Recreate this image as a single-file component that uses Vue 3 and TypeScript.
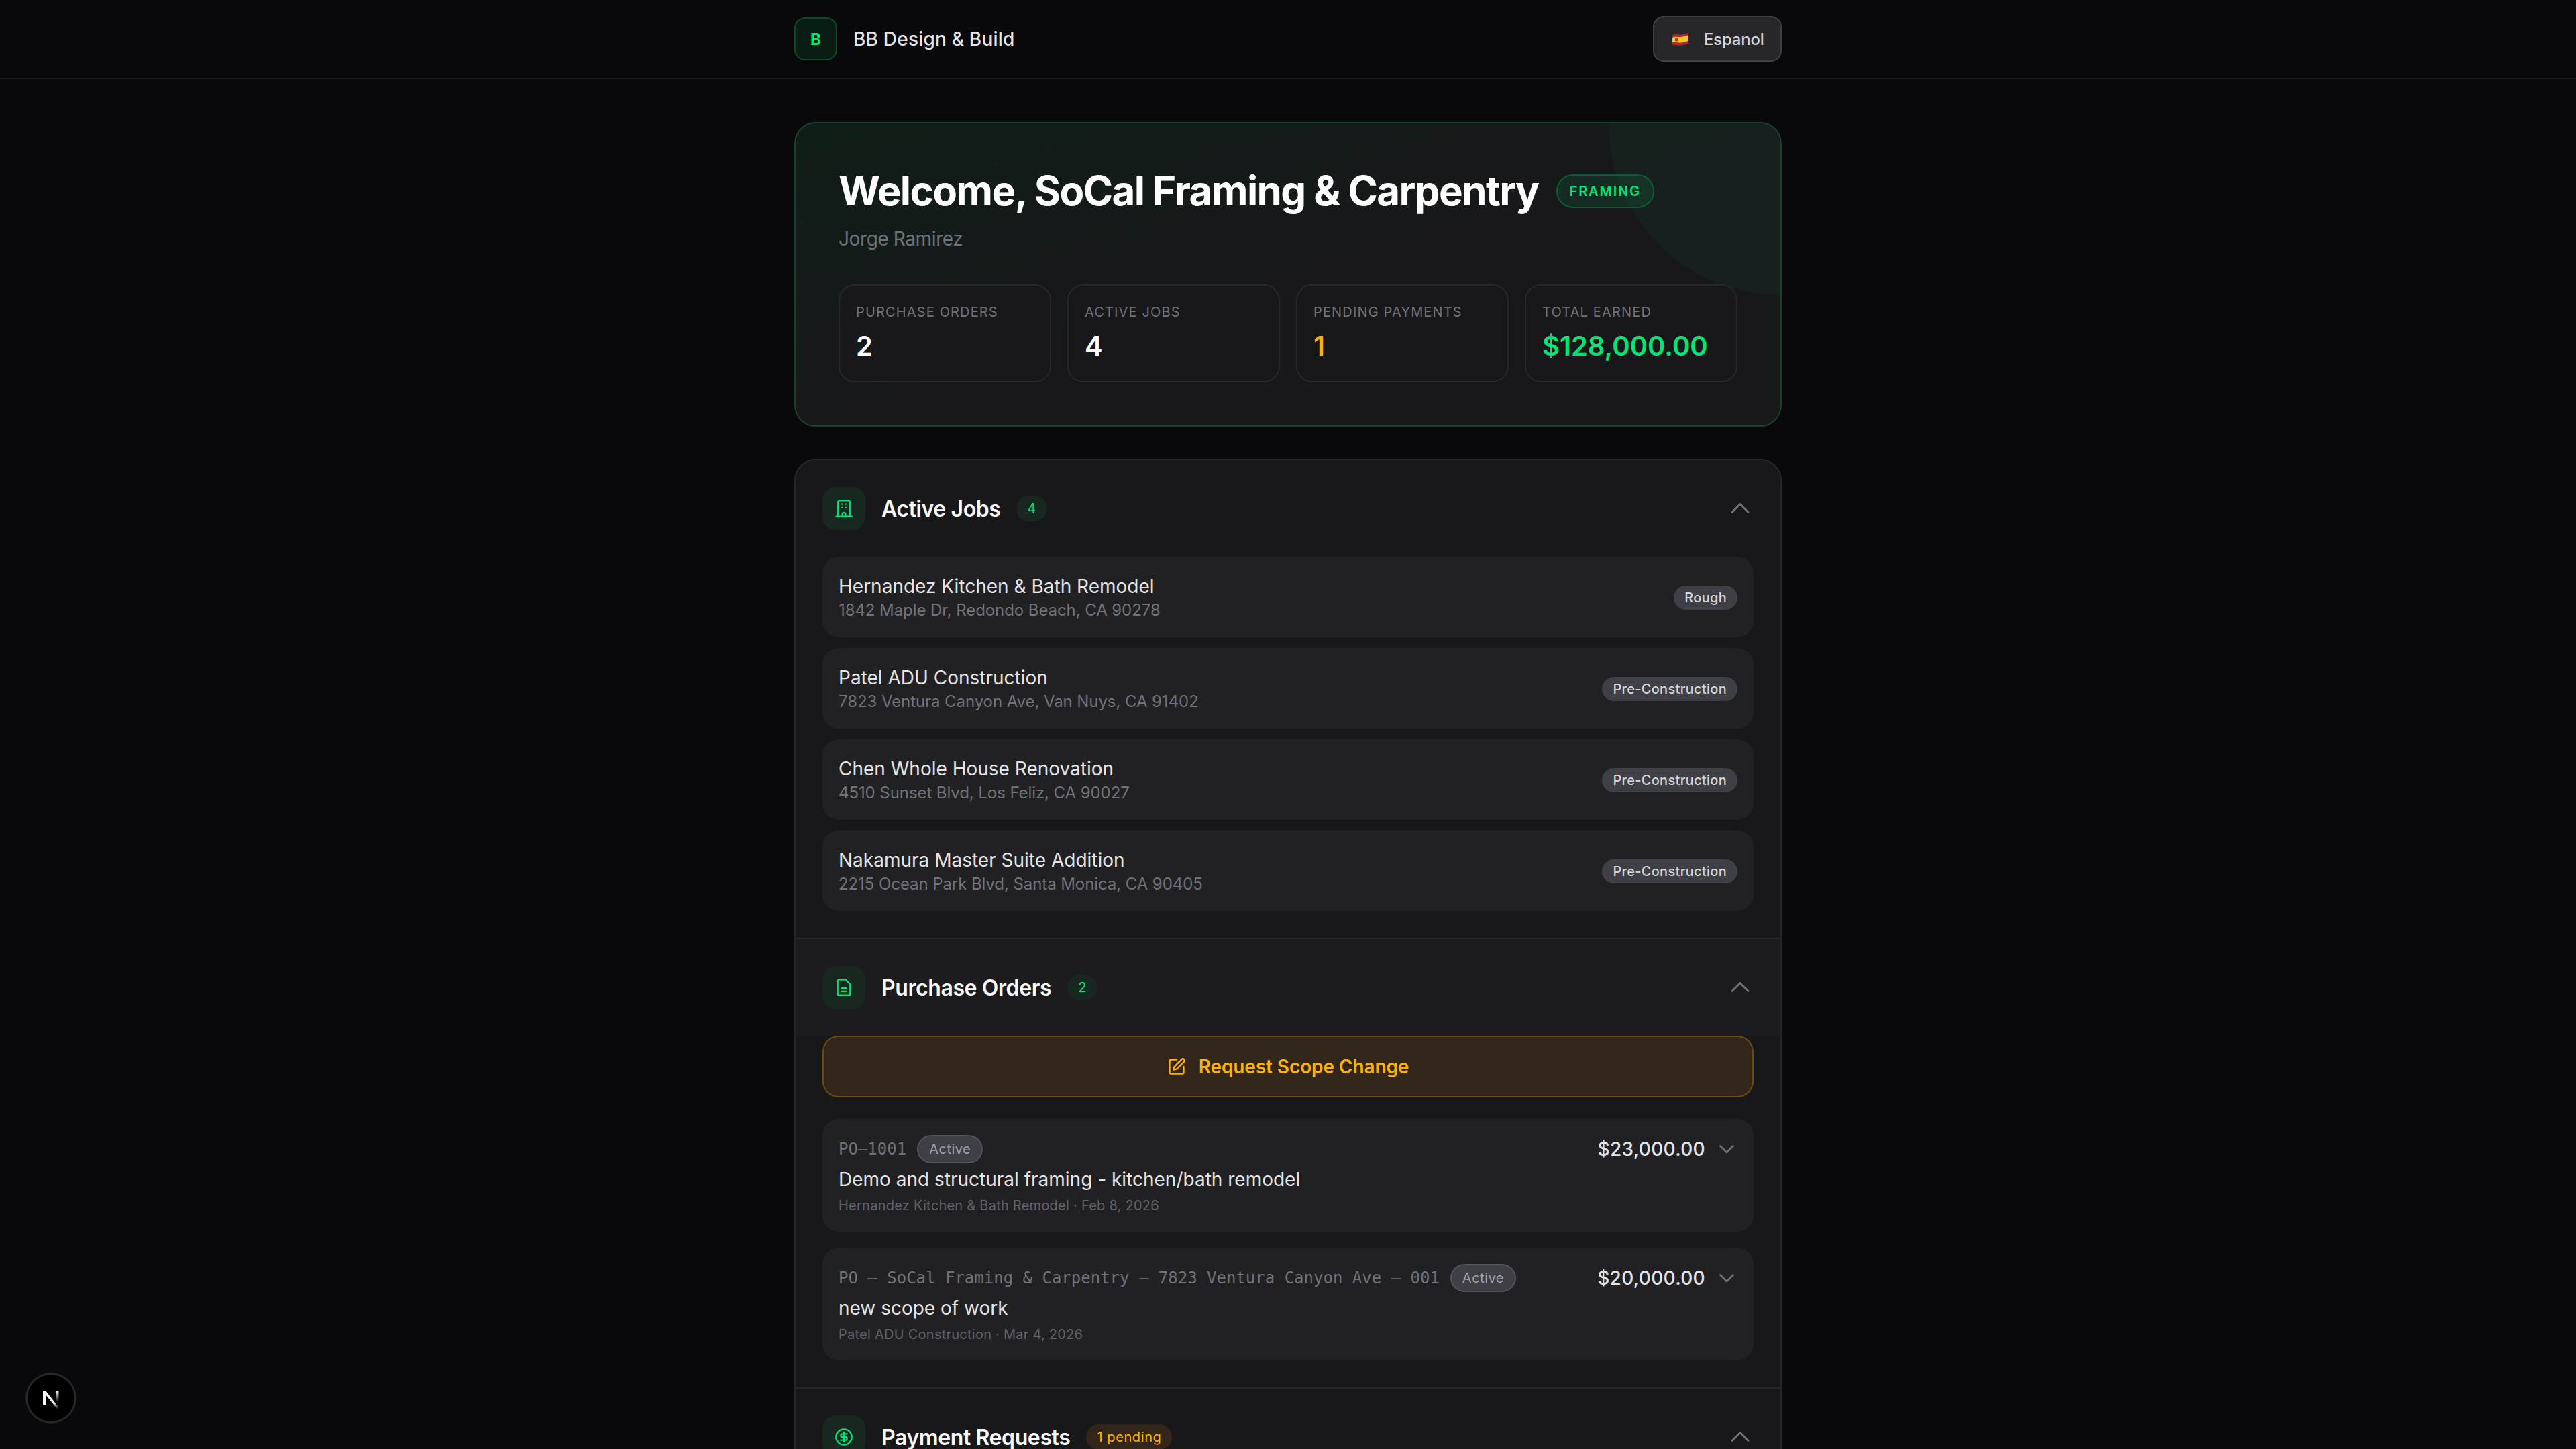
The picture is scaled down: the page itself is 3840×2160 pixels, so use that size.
<script setup lang="ts">
interface Stat { label: string; value: string; tone: string }
interface Job { name: string; address: string; stage: string }
interface Order { id: string; title: string; meta: string; amount: string }

const stats: Stat[] = [
  { label: 'Purchase Orders', value: '2', tone: '' },
  { label: 'Active Jobs', value: '4', tone: '' },
  { label: 'Pending Payments', value: '1', tone: 'amber' },
  { label: 'Total Earned', value: '$128,000.00', tone: 'green' },
]
const jobs: Job[] = [
  { name: 'Hernandez Kitchen & Bath Remodel', address: '1842 Maple Dr, Redondo Beach, CA 90278', stage: 'Rough' },
  { name: 'Patel ADU Construction', address: '7823 Ventura Canyon Ave, Van Nuys, CA 91402', stage: 'Pre-Construction' },
  { name: 'Chen Whole House Renovation', address: '4510 Sunset Blvd, Los Feliz, CA 90027', stage: 'Pre-Construction' },
  { name: 'Nakamura Master Suite Addition', address: '2215 Ocean Park Blvd, Santa Monica, CA 90405', stage: 'Pre-Construction' },
]
const orders: Order[] = [
  { id: 'PO–1001', title: 'Demo and structural framing - kitchen/bath remodel', meta: 'Hernandez Kitchen & Bath Remodel · Feb 8, 2026', amount: '$23,000.00' },
  { id: 'PO – SoCal Framing & Carpentry – 7823 Ventura Canyon Ave – 001', title: 'new scope of work', meta: 'Patel ADU Construction · Mar 4, 2026', amount: '$20,000.00' },
]
</script>

<template>
  <div class="page">
    <header class="topbar">
      <div class="topbar-inner">
        <div class="brand">
          <div class="logo">B</div>
          <span class="brand-name">BB Design &amp; Build</span>
        </div>
        <button class="lang">
          <svg class="flag" width="26" height="20" viewBox="0 0 26 20">
            <path d="M1 4.500C6 2 10 4 14 3.500C18 3 22 1.500 25 1V17C22 17.500 18 19 14 19.500C10 20 6 18 1 19Z" fill="#b5262c" />
            <path d="M1 8C6 5.500 10 7.500 14 7C18 6.500 22 5 25 4.500V13C22 13.500 18 15 14 15.500C10 16 6 14 1 15Z" fill="#f4c430" />
            <rect x="5" y="8.500" width="4.500" height="5" rx="1.500" fill="#a5402c" />
          </svg>
          <span>Espanol</span>
        </button>
      </div>
    </header>

    <main class="content">
      <section class="hero">
        <div class="hero-circle"></div>
        <div class="hero-title-row">
          <h1>Welcome, SoCal Framing &amp; Carpentry</h1>
          <span class="trade">FRAMING</span>
        </div>
        <p class="hero-sub">Jorge Ramirez</p>
        <div class="stats">
          <div v-for="s in stats" :key="s.label" class="stat">
            <div class="stat-label">{{ s.label }}</div>
            <div class="stat-value" :class="s.tone">{{ s.value }}</div>
          </div>
        </div>
      </section>

      <section class="panel">
        <div class="block">
          <div class="block-head">
            <div class="icon-box">
              <svg width="28" height="28" viewBox="0 0 24 24" fill="none" stroke="currentColor" stroke-width="2" stroke-linecap="round" stroke-linejoin="round">
                <path d="M2 22h20" />
                <path d="M4.500 22V4a2 2 0 0 1 2-2h11a2 2 0 0 1 2 2v18" />
                <path d="M10 22v-3a2 2 0 0 1 4 0v3" />
                <path d="M9.500 6.500h.5M14 6.500h.5M9.500 11h.5M14 11h.5" />
              </svg>
            </div>
            <h2>Active Jobs</h2>
            <span class="count">4</span>
            <svg class="toggle" width="40" height="40" viewBox="0 0 40 40" fill="none" stroke="currentColor" stroke-width="3" stroke-linecap="round" stroke-linejoin="round">
              <path d="M8 25.500 20 13.500l12 12" />
            </svg>
          </div>
          <div class="block-body jobs">
            <div v-for="j in jobs" :key="j.name" class="job">
              <div>
                <div class="job-name">{{ j.name }}</div>
                <div class="job-address">{{ j.address }}</div>
              </div>
              <span class="stage">{{ j.stage }}</span>
            </div>
          </div>
        </div>

        <div class="block">
          <div class="block-head hovered">
            <div class="icon-box">
              <svg width="28" height="28" viewBox="0 0 24 24" fill="none" stroke="currentColor" stroke-width="2" stroke-linecap="round" stroke-linejoin="round">
                <path d="M14 2H6a2 2 0 0 0-2 2v16a2 2 0 0 0 2 2h12a2 2 0 0 0 2-2V8z" />
                <path d="M9 13h6M9 17h6" />
              </svg>
            </div>
            <h2>Purchase Orders</h2>
            <span class="count">2</span>
            <svg class="toggle" width="40" height="40" viewBox="0 0 40 40" fill="none" stroke="currentColor" stroke-width="3" stroke-linecap="round" stroke-linejoin="round">
              <path d="M8 25.500 20 13.500l12 12" />
            </svg>
          </div>
          <div class="block-body">
            <button class="scope">
              <svg width="28" height="28" viewBox="0 0 24 24" fill="none" stroke="currentColor" stroke-width="2" stroke-linecap="round" stroke-linejoin="round">
                <path d="M12 3H5a2 2 0 0 0-2 2v14a2 2 0 0 0 2 2h14a2 2 0 0 0 2-2v-7" />
                <path d="M18.375 2.625a1 1 0 0 1 3 3l-9.013 9.014a2 2 0 0 1-.853.505l-2.873.84a.5.5 0 0 1-.62-.62l.84-2.873a2 2 0 0 1 .506-.852z" />
              </svg>
              <span>Request Scope Change</span>
            </button>
            <div class="orders">
              <div v-for="o in orders" :key="o.id" class="order">
                <div class="order-main">
                  <div class="order-top">
                    <span class="order-id">{{ o.id }}</span>
                    <span class="order-status">Active</span>
                  </div>
                  <div class="order-title">{{ o.title }}</div>
                  <div class="order-meta">{{ o.meta }}</div>
                </div>
                <div class="order-side">
                  <span class="amount">{{ o.amount }}</span>
                  <svg class="order-chevron" width="32" height="32" viewBox="0 0 32 32" fill="none" stroke="currentColor" stroke-width="2.600" stroke-linecap="round" stroke-linejoin="round">
                    <path d="M6.500 11.500 16 21l9.500-9.500" />
                  </svg>
                </div>
              </div>
            </div>
          </div>
        </div>

        <div class="block">
          <div class="block-head">
            <div class="icon-box">
              <svg width="28" height="28" viewBox="0 0 24 24" fill="none" stroke="currentColor" stroke-width="2" stroke-linecap="round" stroke-linejoin="round">
                <circle cx="12" cy="12" r="10" />
                <path d="M16 8h-6a2 2 0 1 0 0 4h4a2 2 0 1 1 0 4H8" />
                <path d="M12 18V6" />
              </svg>
            </div>
            <h2>Payment Requests</h2>
            <span class="count warn">1 pending</span>
            <svg class="toggle" width="40" height="40" viewBox="0 0 40 40" fill="none" stroke="currentColor" stroke-width="3" stroke-linecap="round" stroke-linejoin="round">
              <path d="M8 25.500 20 13.500l12 12" />
            </svg>
          </div>
        </div>
      </section>
    </main>

    <div class="dev-badge">
      <svg width="76" height="76" viewBox="0 0 76 76">
        <defs>
          <linearGradient id="nDiag" gradientUnits="userSpaceOnUse" x1="32" y1="32" x2="49" y2="54">
            <stop offset="0.6" stop-color="#fff" />
            <stop offset="1" stop-color="#fff" stop-opacity="0" />
          </linearGradient>
          <linearGradient id="nRight" x1="0" y1="0" x2="0" y2="1">
            <stop offset="0" stop-color="#fff" />
            <stop offset="1" stop-color="#fff" stop-opacity="0" />
          </linearGradient>
        </defs>
        <path d="M26 27H30L49.500 52 47 54 30 33V49H26Z" fill="url(#nDiag)" />
        <rect x="46" y="27" width="3.500" height="17" fill="url(#nRight)" />
      </svg>
    </div>
  </div>
</template>

<style scoped>
.page {
  height: 2160px;
  overflow: hidden;
  background: #09090b;
  color: #fafafa;
  font-family: Inter, "Liberation Sans", sans-serif;
}
.topbar {
  border-bottom: 2px solid #18181b;
}
.topbar-inner {
  width: 1472px;
  margin: 0 auto;
  padding: 24px 0;
  display: flex;
  align-items: center;
  justify-content: space-between;
}
.brand {
  display: flex;
  align-items: center;
  gap: 24px;
}
.logo {
  width: 64px;
  height: 64px;
  box-sizing: border-box;
  border: 2px solid #0c4b29;
  border-radius: 16px;
  background: #0a1d14;
  color: #00e676;
  font-size: 24px;
  font-weight: 700;
  display: flex;
  align-items: center;
  justify-content: center;
}
.brand-name {
  font-size: 28px;
  font-weight: 500;
  letter-spacing: 0.2px;
  color: #e4e4e7;
}
.lang {
  width: 192px;
  height: 68px;
  box-sizing: border-box;
  border: 2px solid #3f3f46;
  border-radius: 16px;
  background: #27272a;
  color: #d4d4d8;
  font-family: inherit;
  font-size: 24px;
  font-weight: 500;
  letter-spacing: -0.2px;
  display: flex;
  align-items: center;
  padding: 0 26px;
  gap: 22px;
}
.flag {
  flex: none;
}
.content {
  width: 1472px;
  margin: 0 auto;
  padding-top: 64px;
  display: flex;
  flex-direction: column;
  gap: 48px;
}
.hero {
  position: relative;
  overflow: hidden;
  border: 2px solid #18422b;
  border-radius: 32px;
  padding: 64px;
  background: linear-gradient(to bottom right, #0f1e17 0%, #18181b 50%);
}
.hero-circle {
  position: absolute;
  top: -256px;
  right: -256px;
  width: 512px;
  height: 512px;
  border-radius: 50%;
  background: rgba(0, 230, 118, 0.04);
}
.hero-title-row {
  position: relative;
  display: flex;
  align-items: center;
  gap: 26px;
  height: 72px;
}
h1 {
  margin: 0;
  font-size: 60px;
  line-height: 72px;
  font-weight: 700;
  letter-spacing: -1.600px;
  color: #fff;
}
.trade {
  box-sizing: border-box;
  height: 50px;
  margin-top: 2px;
  padding: 0 18px;
  border: 2px solid #0f5a33;
  border-radius: 25px;
  background: rgba(0, 230, 118, 0.1);
  color: #00e676;
  font-size: 20px;
  font-weight: 600;
  letter-spacing: 1.800px;
  display: flex;
  align-items: center;
}
.hero-sub {
  position: relative;
  margin: 16px 0 48px;
  font-size: 28px;
  line-height: 40px;
  letter-spacing: -0.4px;
  color: #71717a;
}
.stats {
  position: relative;
  display: grid;
  grid-template-columns: repeat(4, 1fr);
  gap: 24px;
}
.stat {
  border: 2px solid #27272a;
  border-radius: 24px;
  padding: 24px;
  background: #18181b;
}
.stat-label {
  font-size: 20px;
  line-height: 30px;
  letter-spacing: 1.150px;
  text-transform: uppercase;
  color: #71717a;
}
.stat-value {
  margin-top: 8px;
  font-size: 40px;
  line-height: 56px;
  font-weight: 600;
  color: #fff;
}
.stat-value.amber {
  color: #ffb300;
}
.stat-value.green {
  color: #00e676;
}
.panel {
  border: 2px solid #27272a;
  border-radius: 32px;
  background: #18181b;
  overflow: hidden;
}
.block + .block {
  border-top: 2px solid #27272a;
}
.block-head {
  display: flex;
  align-items: center;
  padding: 40px;
}
.block-head.hovered {
  background: #1c1c1e;
}
.icon-box {
  width: 64px;
  height: 64px;
  border-radius: 20px;
  background: #18271f;
  color: #00e676;
  display: flex;
  align-items: center;
  justify-content: center;
  margin-right: 24px;
}
h2 {
  margin: 0;
  font-size: 32px;
  font-weight: 600;
  letter-spacing: -0.4px;
  color: #fafafa;
}
.count {
  margin-left: 24px;
  min-width: 44px;
  box-sizing: border-box;
  height: 38px;
  padding: 0 16px;
  border-radius: 19px;
  background: #18271f;
  color: #00e676;
  font-size: 20px;
  letter-spacing: 0.6px;
  display: flex;
  align-items: center;
  justify-content: center;
}
.count.warn {
  background: #32261a;
  color: #ffb300;
}
.toggle {
  margin-left: auto;
  color: #71717a;
}
.block-body {
  padding: 0 40px 40px;
}
.jobs {
  display: flex;
  flex-direction: column;
  gap: 16px;
}
.job {
  display: flex;
  align-items: center;
  justify-content: space-between;
  padding: 24px;
  border-radius: 24px;
  background: #212123;
}
.job-name {
  font-size: 28px;
  line-height: 40px;
  color: #e4e4e7;
}
.job-address {
  font-size: 24px;
  line-height: 32px;
  letter-spacing: -0.08px;
  color: #71717a;
}
.stage {
  margin-top: 2px;
  padding: 3px 16px;
  border-radius: 18px;
  background: #3f3f46;
  color: #d4d4d8;
  font-size: 20px;
  line-height: 30px;
  font-weight: 500;
  letter-spacing: 0.3px;
}
.scope {
  width: 100%;
  height: 92px;
  border: 2px solid #6b4a14;
  border-radius: 24px;
  background: #32261a;
  color: #ffb300;
  font-family: inherit;
  font-size: 28px;
  font-weight: 600;
  letter-spacing: -0.1px;
  display: flex;
  align-items: center;
  justify-content: center;
  gap: 19px;
}
.orders {
  margin-top: 32px;
  display: flex;
  flex-direction: column;
  gap: 24px;
}
.order {
  display: flex;
  justify-content: space-between;
  padding: 24px;
  border-radius: 24px;
  background: #212123;
}
.order-top {
  display: flex;
  align-items: center;
  gap: 16px;
}
.order-id {
  font-family: "DejaVu Sans Mono", monospace;
  font-size: 24px;
  color: #71717a;
}
.order-status {
  box-sizing: border-box;
  height: 42px;
  padding: 0 16px;
  border: 2px solid #52525b;
  border-radius: 21px;
  background: #3f3f46;
  color: #a1a1aa;
  font-size: 20px;
  letter-spacing: 0.5px;
  display: flex;
  align-items: center;
}
.order-title {
  margin-top: 4px;
  font-size: 28px;
  line-height: 40px;
  color: #e4e4e7;
}
.order-meta {
  margin-top: 4px;
  font-size: 20px;
  line-height: 30px;
  letter-spacing: 0.25px;
  color: #62626b;
}
.order-side {
  height: 42px;
  display: flex;
  align-items: center;
  gap: 16px;
}
.amount {
  font-size: 28px;
  font-weight: 500;
  letter-spacing: 0.3px;
  color: #e4e4e7;
}
.order-chevron {
  color: #71717a;
}
.dev-badge {
  position: fixed;
  left: 38px;
  bottom: 38px;
  width: 76px;
  height: 76px;
  box-sizing: border-box;
  border-radius: 50%;
  background: #000;
  box-shadow: inset 0 0 0 3px #27272a;
}
</style>

<style>
html, body {
  margin: 0;
  background: #09090b;
  overflow: hidden;
}
</style>
